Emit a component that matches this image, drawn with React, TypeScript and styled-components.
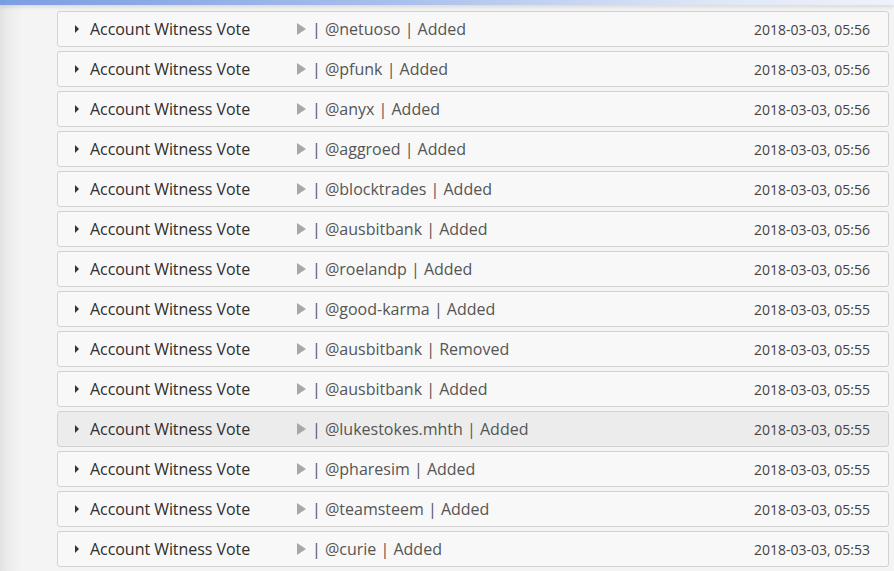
import styled, { createGlobalStyle } from "styled-components";

interface Vote {
  account: string;
  action: string;
  time: string;
}

const votes: Vote[] = [
  { account: "netuoso", action: "Added", time: "2018-03-03, 05:56" },
  { account: "pfunk", action: "Added", time: "2018-03-03, 05:56" },
  { account: "anyx", action: "Added", time: "2018-03-03, 05:56" },
  { account: "aggroed", action: "Added", time: "2018-03-03, 05:56" },
  { account: "blocktrades", action: "Added", time: "2018-03-03, 05:56" },
  { account: "ausbitbank", action: "Added", time: "2018-03-03, 05:56" },
  { account: "roelandp", action: "Added", time: "2018-03-03, 05:56" },
  { account: "good-karma", action: "Added", time: "2018-03-03, 05:55" },
  { account: "ausbitbank", action: "Removed", time: "2018-03-03, 05:55" },
  { account: "ausbitbank", action: "Added", time: "2018-03-03, 05:55" },
  { account: "lukestokes.mhth", action: "Added", time: "2018-03-03, 05:55" },
  { account: "pharesim", action: "Added", time: "2018-03-03, 05:55" },
  { account: "teamsteem", action: "Added", time: "2018-03-03, 05:55" },
  { account: "curie", action: "Added", time: "2018-03-03, 05:53" },
];

const HOVERED = 10;

function App() {
  return (
    <>
      <GlobalStyle />
      <TopBar />
      <List>
        {votes.map((vote, i) => (
          <Row key={i} $active={i === HOVERED}>
            <Caret />
            <Title>Account Witness Vote</Title>
            <Detail>
              <Play />
              <span>| @{vote.account} | {vote.action}</span>
            </Detail>
            <Time>{vote.time}</Time>
          </Row>
        ))}
      </List>
    </>
  );
}

export default App;

const GlobalStyle = createGlobalStyle`
  html, body {
    margin: 0;
    height: 100%;
    overflow: hidden;
  }
  body {
    background: linear-gradient(90deg, #e2e2e2 0, #ececec 8px, #f4f4f4 22px, #f4f4f4 100%);
    font-family: "Open Sans", "Liberation Sans", sans-serif;
    color: #333;
  }
`;

const TopBar = styled.div`
  height: 5px;
  background: linear-gradient(90deg, #7b9de2 0%, #a9c0ec 45%, #dfe7f6 80%, #eef2fa 100%);
  box-shadow: 0 2px 4px rgba(0, 0, 0, 0.12);
  position: relative;
  z-index: 1;
`;

const List = styled.div`
  display: flex;
  flex-direction: column;
  gap: 4px;
  padding: 6px 5px 0 57px;
`;

const Row = styled.div<{ $active?: boolean }>`
  display: flex;
  align-items: center;
  height: 34px;
  padding: 0 18px 0 17px;
  border: 1px solid #d2d2d2;
  border-radius: 3px;
  background: ${(p) => (p.$active ? "#ececec" : "#f8f8f8")};
`;

const Caret = styled.span`
  width: 0;
  height: 0;
  border-top: 4px solid transparent;
  border-bottom: 4px solid transparent;
  border-left: 4px solid #333;
  margin-right: 11px;
  flex-shrink: 0;
`;

const Title = styled.span`
  width: 207px;
  flex-shrink: 0;
  font-size: 16px;
  letter-spacing: -0.05px;
  color: #2e2e2e;
  white-space: nowrap;
`;

const Detail = styled.span`
  flex: 1;
  display: flex;
  align-items: center;
  gap: 6px;
  font-size: 16px;
  color: #555;
  white-space: nowrap;
`;

const Play = styled.span`
  width: 0;
  height: 0;
  border-top: 6px solid transparent;
  border-bottom: 6px solid transparent;
  border-left: 9px solid #a8a8a8;
`;

const Time = styled.span`
  font-size: 14px;
  color: #444;
  white-space: nowrap;
`;
